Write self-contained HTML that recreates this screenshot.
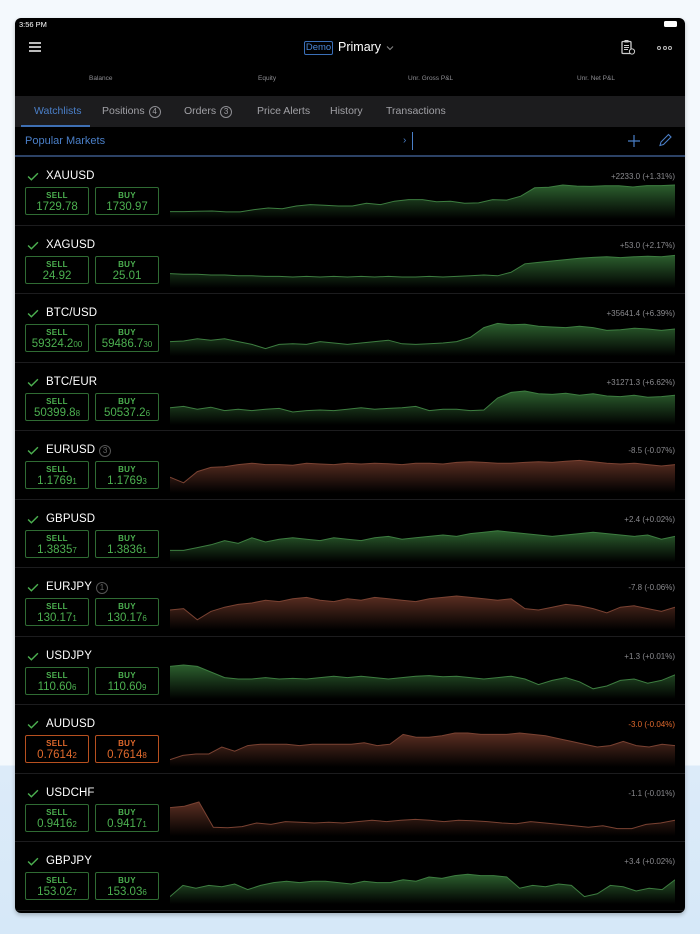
<!DOCTYPE html>
<html><head><meta charset="utf-8"><style>
*{margin:0;padding:0;box-sizing:border-box}
body{width:700px;height:934px;overflow:hidden;font-family:"Liberation Sans",sans-serif;background:linear-gradient(#f4f9fd 0,#f4f9fd 765px,#dcebf9 766px,#d6e8f8 934px);position:relative}
#dev{position:absolute;left:15px;top:18px;width:670px;height:895px;background:#000;border-radius:6px;overflow:hidden;box-shadow:0 2px 4px rgba(0,0,0,.25)}
.a{position:absolute}
.t{color:#fff}
.lbl{font-size:6.5px;color:#8e8e93;top:57px}
.tab{font-size:10.5px;color:#a0a0a5;top:87px}
.badge{display:inline-block;width:12px;height:12px;border:1px solid #8e8e93;border-radius:50%;font-size:8px;text-align:center;line-height:10px;margin-left:4px;vertical-align:0}
.row{position:absolute;left:0;width:670px;height:68.5px;border-bottom:1px solid #1c1c1e}
.nm{position:absolute;left:31px;top:13px;font-size:11.5px;color:#fff;letter-spacing:.1px}
.ck{position:absolute;left:12px;top:15px;width:12px;height:9px}
.pc{position:absolute;right:10px;top:15px;font-size:8px;color:#8a8a8e}
.btn{position:absolute;top:30px;width:64px;height:28px;border:1px solid #2f6b33;border-radius:2px;text-align:center;color:#4cb050}
.btn b{display:block;font-size:8px;margin-top:3px;letter-spacing:.3px}
.btn span{display:block;font-size:11.5px;margin-top:1px}
.btn small{font-size:8px}
.o .btn{border-color:#b8501f;color:#e0692c}
svg.ch{position:absolute;left:155px;top:24px}
</style></head><body>
<div id="dev">
<div class="a t" style="left:4px;top:2px;font-size:7.5px">3:56 PM</div>
<div class="a" style="right:8px;top:3px;width:13px;height:6px;border-radius:1.5px;background:#fff"></div>
<div class="a" style="left:14px;top:24px;width:12px;height:1.5px;background:#bbb;box-shadow:0 4px 0 #bbb,0 8px 0 #bbb"></div>
<div class="a" style="left:289px;top:23px;width:29px;height:14px;border:1px solid #3a6fb8;border-radius:2px;color:#4a86d6;font-size:9.5px;text-align:center;line-height:12px">Demo</div>
<div class="a t" style="left:323px;top:22px;font-size:12.5px">Primary</div>
<svg class="a" style="left:371px;top:27px" width="8" height="6"><path d="M1 1.5 L4 4.5 L7 1.5" stroke="#888" fill="none"/></svg>
<svg class="a" style="left:605px;top:21px" width="16" height="16"><rect x="2" y="2.5" width="9" height="12" rx="1" fill="none" stroke="#ccc" stroke-width="1.3"/><rect x="4.5" y="1" width="4" height="2.5" fill="#ccc"/><path d="M4 6.5h5M4 8.5h5M4 10.5h4" stroke="#ccc"/><circle cx="12" cy="12.5" r="2.6" fill="#000" stroke="#ccc"/></svg>
<div class="a" style="left:642px;top:28px;font-size:0"><span style="display:inline-block;width:4px;height:4px;border:1px solid #bbb;border-radius:50%;margin-right:1.5px"></span><span style="display:inline-block;width:4px;height:4px;border:1px solid #bbb;border-radius:50%;margin-right:1.5px"></span><span style="display:inline-block;width:4px;height:4px;border:1px solid #bbb;border-radius:50%"></span></div>
<div class="a lbl" style="left:74px">Balance</div>
<div class="a lbl" style="left:243px">Equity</div>
<div class="a lbl" style="left:393px">Unr. Gross P&amp;L</div>
<div class="a lbl" style="left:562px">Unr. Net P&amp;L</div>
<div class="a" style="left:0;top:78px;width:670px;height:31px;background:#1c1c1e"></div>
<div class="a tab" style="left:19px;color:#4a7fc8">Watchlists</div>
<div class="a" style="left:6px;top:107px;width:69px;height:2px;background:#3e6fb3"></div>
<div class="a tab" style="left:87px">Positions<span class="badge">4</span></div>
<div class="a tab" style="left:169px">Orders<span class="badge">3</span></div>
<div class="a tab" style="left:242px">Price Alerts</div>
<div class="a tab" style="left:315px">History</div>
<div class="a tab" style="left:371px">Transactions</div>
<div class="a" style="left:10px;top:117px;font-size:11px;color:#4a7fc8">Popular Markets</div>
<div class="a" style="left:388px;top:117px;font-size:10px;color:#4a7fc8">›</div>
<div class="a" style="left:397px;top:114px;width:1px;height:18px;background:#4a7fc8"></div>
<svg class="a" style="left:612px;top:116px" width="14" height="14"><path d="M7 1v12M1 7h12" stroke="#4a7fc8" stroke-width="1.2"/></svg>
<svg class="a" style="left:643px;top:115px" width="14" height="14"><path d="M2 12.5l1-3.5 7.5-7.5 2.5 2.5-7.5 7.5z" fill="none" stroke="#4a7fc8" stroke-width="1.1"/></svg>
<div class="a" style="left:0;top:137px;width:670px;height:2px;background:#2c4266"></div>
<div id="rows"></div>
</div>
<script>
var D=[
["XAUUSD","+2233.0 (+1.31%)","1729.78","","1730.97","","g",[.05,.05,.06,.07,.04,.04,.12,.18,.15,.25,.3,.28,.25,.25,.35,.3,.42,.48,.48,.4,.42,.35,.36,.48,.46,.6,.9,.92,1,.96,.95,.97,.97,.93,.98,.98,1]],
["XAGUSD","+53.0 (+2.17%)","24.92","","25.01","","g",[.3,.28,.28,.25,.25,.22,.22,.2,.2,.18,.2,.18,.2,.18,.2,.18,.2,.18,.18,.2,.18,.2,.22,.25,.22,.35,.65,.7,.75,.8,.85,.88,.9,.87,.9,.92,.9,.95]],
["BTC/USD","+35641.4 (+6.39%)","59324.2","00","59486.7","30","g",[.3,.32,.4,.35,.4,.3,.2,.05,.2,.22,.2,.3,.25,.2,.25,.3,.35,.22,.2,.22,.25,.3,.45,.8,.95,.9,.92,.85,.82,.8,.85,.8,.7,.72,.78,.75,.7,.75]],
["BTC/EUR","+31271.3 (+6.62%)","50399.8","8","50537.2","6","g",[.4,.45,.35,.42,.3,.35,.3,.35,.38,.25,.3,.32,.3,.35,.4,.35,.38,.4,.45,.3,.35,.35,.3,.32,.75,.95,1,.9,.88,.92,.85,.9,.82,.8,.85,.78,.8,.85]],
["EURUSD","-8.5 (-0.07%)","1.1769","1","1.1769","3","r",[.35,.15,.55,.7,.72,.8,.85,.8,.8,.78,.85,.82,.8,.85,.82,.85,.83,.8,.85,.85,.82,.88,.9,.88,.85,.85,.88,.9,.88,.92,.95,.9,.85,.82,.85,.8,.75,.8]],
["GBPUSD","+2.4 (+0.02%)","1.3835","7","1.3836","1","g",[.2,.2,.3,.4,.55,.45,.65,.5,.6,.65,.6,.55,.65,.6,.55,.65,.7,.6,.65,.7,.75,.7,.8,.85,.9,.85,.8,.75,.7,.75,.8,.85,.8,.75,.7,.75,.6,.7]],
["EURJPY","-7.8 (-0.06%)","130.17","1","130.17","6","r",[.5,.55,.15,.45,.6,.7,.75,.85,.8,.9,.95,.85,.8,.9,.85,.95,.9,.85,.8,.9,.95,1,.95,.9,.85,.9,.55,.5,.6,.7,.65,.55,.4,.6,.65,.55,.45,.6]],
["USDJPY","+1.3 (+0.01%)","110.60","6","110.60","9","g",[.95,1,.95,.75,.55,.5,.5,.55,.5,.52,.5,.55,.6,.55,.6,.55,.5,.55,.6,.62,.58,.6,.55,.5,.55,.6,.5,.3,.45,.55,.4,.15,.25,.45,.5,.35,.45,.65]],
["AUDUSD","-3.0 (-0.04%)","0.7614","2","0.7614","8","r",[.05,.2,.25,.25,.5,.35,.55,.6,.6,.6,.55,.6,.6,.6,.6,.65,.55,.6,.95,.85,.85,.9,1,1,.95,.95,.95,1,.95,.9,.8,.7,.6,.5,.55,.7,.55,.5,.6,.55]],
["USDCHF","-1.1 (-0.01%)","0.9416","2","0.9417","1","r",[.8,.85,1,.1,.08,.12,.25,.2,.3,.28,.25,.28,.25,.3,.35,.3,.35,.38,.35,.3,.35,.33,.3,.25,.22,.3,.25,.2,.15,.1,.15,.05,.05,.2,.25,.35]],
["GBPJPY","+3.4 (+0.02%)","153.02","7","153.03","6","g",[.05,.45,.35,.45,.4,.5,.3,.45,.55,.6,.55,.6,.6,.55,.5,.6,.55,.55,.65,.6,.75,.7,.8,.85,.8,.8,.75,.35,.45,.4,.5,.45,.05,.15,.45,.4,.25,.35,.3,.65]]
];
var h="";
D.forEach(function(d,i){
 var top=139+i*68.5,W=505,H=38,n=d[7].length,pts=[];
 for(var k=0;k<n;k++){pts.push((k*W/(n-1)).toFixed(1)+","+(H-6-d[7][k]*(H-10)).toFixed(1));}
 var g=d[6]=="g",fc=g?"#2c5f2e":"#5a2e22",lc=g?"#3d7d40":"#7a4232";
 var o=d[0]=="AUDUSD";
 h+='<div class="row'+(o?' o':'')+'" style="top:'+top+'px">'+
 '<svg class="ck" viewBox="0 0 11 8"><path d="M1 4l3 3 6-6" stroke="#4cb050" stroke-width="1.3" fill="none"/></svg>'+
 '<div class="nm">'+d[0]+(d[0]=="EURUSD"?'<span class="badge" style="color:#666;border-color:#555">3</span>':'')+(d[0]=="EURJPY"?'<span class="badge" style="color:#666;border-color:#555">1</span>':'')+'</div>'+
 '<div class="pc" style="'+(o?'color:#e0692c':'')+'">'+d[1]+'</div>'+
 '<div class="btn" style="left:10px"><b>SELL</b><span>'+d[2]+'<small>'+d[3]+'</small></span></div>'+
 '<div class="btn" style="left:80px"><b>BUY</b><span>'+d[4]+'<small>'+d[5]+'</small></span></div>'+
 '<svg class="ch" width="505" height="38"><defs><linearGradient id="f'+i+'" x1="0" y1="0" x2="0" y2="1"><stop offset="0" stop-color="'+fc+'"/><stop offset="1" stop-color="#000"/></linearGradient></defs>'+
 '<polygon points="0,'+H+' '+pts.join(" ")+' '+W+','+H+'" fill="url(#f'+i+')"/><polyline points="'+pts.join(" ")+'" fill="none" stroke="'+lc+'" stroke-width="1"/></svg></div>';
});
document.getElementById("rows").innerHTML=h;
</script>
</body></html>
